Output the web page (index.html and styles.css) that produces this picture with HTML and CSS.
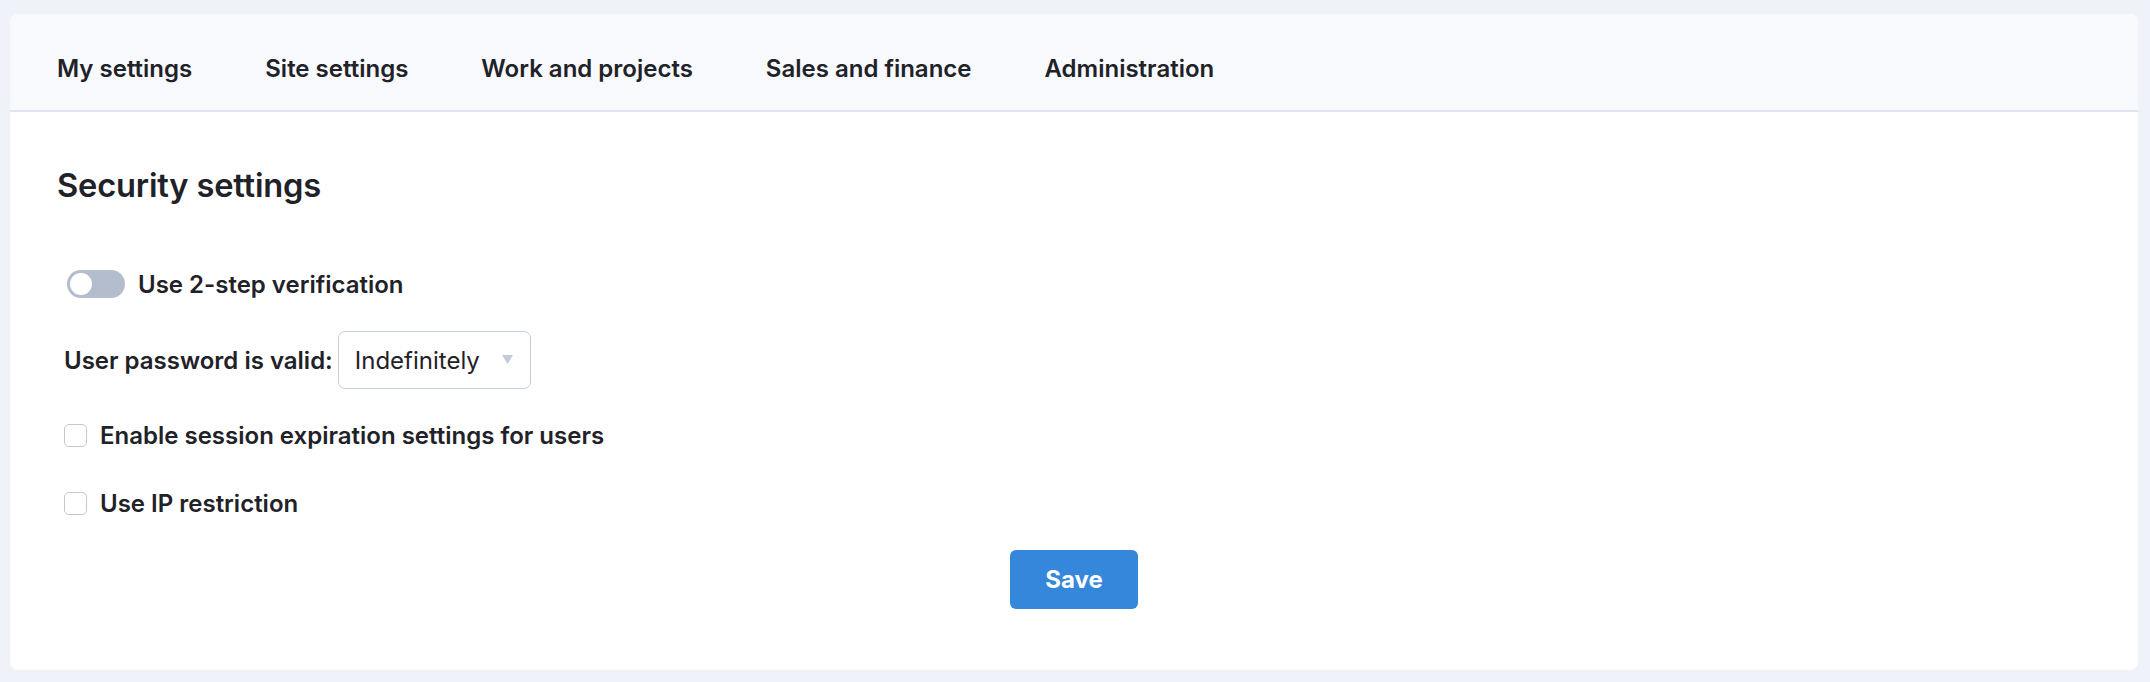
FILE: index.html
```html
<!DOCTYPE html>
<html lang="en">
<head>
<meta charset="utf-8">
<title>Security settings</title>
<link rel="stylesheet" href="styles.css">
</head>
<body>
<div class="card">
  <nav class="tabs">
    <a class="tab">My settings</a>
    <a class="tab">Site settings</a>
    <a class="tab">Work and projects</a>
    <a class="tab">Sales and finance</a>
    <a class="tab">Administration</a>
  </nav>
  <main class="content">
    <h1 class="title">Security settings</h1>
    <div class="form">
      <label class="row row-toggle">
        <span class="toggle"><span class="knob"></span></span>
        <span class="label">Use 2-step verification</span>
      </label>
      <div class="row row-select">
        <span class="label">User password is valid:</span>
        <div class="select">
          <span class="select-value">Indefinitely</span>
          <svg class="caret" width="11" height="9" viewBox="0 0 11 9"><path d="M0 0H11L5.5 9Z" fill="#c3cbda"/></svg>
        </div>
      </div>
      <label class="row row-check">
        <input type="checkbox" class="check">
        <span class="label">Enable session expiration settings for users</span>
      </label>
      <label class="row row-check row-check2">
        <input type="checkbox" class="check">
        <span class="label">Use IP restriction</span>
      </label>
    </div>
    <div class="actions">
      <button class="btn">Save</button>
    </div>
  </main>
</div>
</body>
</html>
```
FILE: styles.css
```css
* { box-sizing: border-box; }
html, body { margin: 0; }
body {
  padding: 14px 12px 12px 10px;
  background: #eff2f9;
  font-family: Inter, "Noto Sans", sans-serif;
  color: #1f2228;
}
.card {
  background: #fff;
  border-radius: 8px;
  overflow: hidden;
}
.tabs {
  display: flex;
  align-items: center;
  gap: 73px;
  height: 98px;
  padding: 12px 0 0 47px;
  background: #f7f9fc;
  border-bottom: 2px solid #dde4ef;
}
.tab {
  font-size: 24px;
  font-weight: 600;
  color: #1f2228;
  cursor: pointer;
}
.content {
  padding: 54px 47px 61px 47px;
}
.title {
  margin: 0;
  font-size: 32.7px;
  line-height: 38px;
  font-weight: 600;
  letter-spacing: -0.2px;
}
.form {
  padding-left: 7px;
  margin-top: 66px;
  display: flex;
  flex-direction: column;
}
.row {
  display: flex;
  align-items: center;
  font-size: 24px;
  font-weight: 600;
}
.label { line-height: 29px; }
.row-toggle { height: 28px; gap: 13px; padding-left: 3px; }
.toggle {
  width: 58px;
  height: 28px;
  border-radius: 14px;
  background: #b4bdce;
  display: flex;
  align-items: center;
  padding: 0 3px;
}
.knob {
  width: 22px;
  height: 22px;
  border-radius: 50%;
  background: #fff;
}
.row-select { margin-top: 33px; gap: 5px; }
.select {
  width: 193px;
  height: 58px;
  border: 1.5px solid #c3cee0;
  border-radius: 7px;
  display: flex;
  align-items: center;
  justify-content: space-between;
  padding: 0 17px 0 16px;
  font-weight: 400;
}
.select-value { font-size: 24px; }
.caret { margin-bottom: 2px; }
.row-check { margin-top: 32px; gap: 13px; }
.row-check2 { margin-top: 39px; }
.check {
  appearance: none;
  -webkit-appearance: none;
  margin: 0;
  width: 23px;
  height: 23px;
  border: 1.5px solid #c3c6cb;
  border-radius: 5px;
  background: #fff;
}
.actions {
  display: flex;
  justify-content: center;
  margin-top: 32px;
}
.btn {
  width: 128px;
  height: 59px;
  border: none;
  border-radius: 6px;
  background: #3487db;
  color: #fff;
  font-family: Inter, "Noto Sans", sans-serif;
  font-size: 24px;
  font-weight: 700;
  cursor: pointer;
}
```
